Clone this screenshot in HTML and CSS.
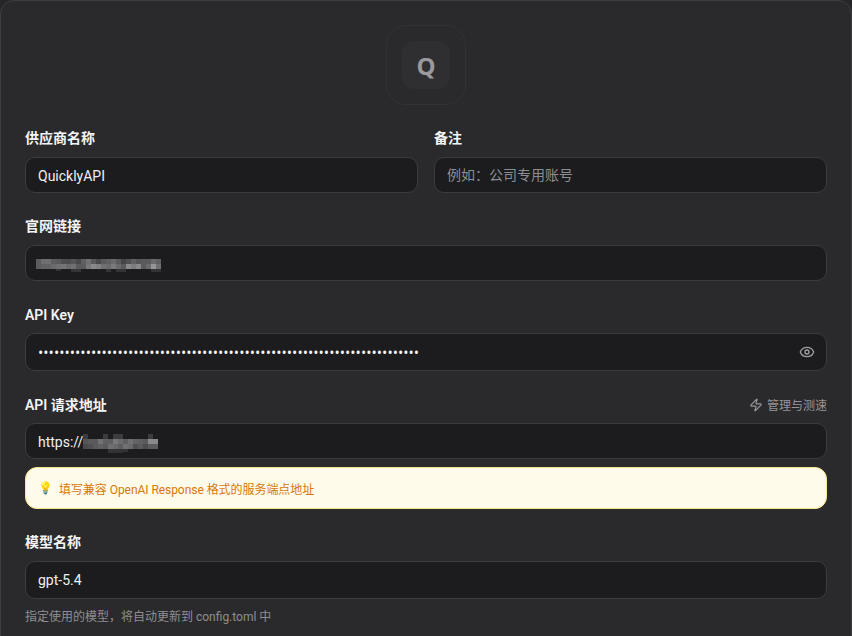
FILE: index.html
```html
<!DOCTYPE html>
<html lang="zh-CN">
<head>
<meta charset="utf-8">
<title>Provider</title>
<link rel="stylesheet" href="styles.css">
</head>
<body>
<main class="panel">
  <div class="logo-wrap"><div class="logo-ring"><div class="logo-tile">Q</div></div></div>
  <div class="row two">
    <div class="field">
      <label class="label cjk">供应商名称</label>
      <div class="input nudge">QuicklyAPI</div>
    </div>
    <div class="field">
      <label class="label cjk">备注</label>
      <div class="input placeholder">例如：公司专用账号</div>
    </div>
  </div>
  <div class="field">
    <label class="label cjk">官网链接</label>
    <div class="input"><svg class="mosaic site" width="125" height="20" viewBox="0 0 125 20" shape-rendering="crispEdges">
      <g transform="translate(0 6)">
        <rect x="0" width="5" height="5" fill="#5c5c5e"/><rect x="5" width="5" height="5" fill="#6e6e70"/><rect x="10" width="5" height="5" fill="#6e6e70"/><rect x="15" width="5" height="5" fill="#5e5e60"/><rect x="20" width="5" height="5" fill="#5a5a5c"/><rect x="25" width="5" height="5" fill="#4e4e50"/><rect x="30" width="5" height="5" fill="#4c4c4e"/><rect x="35" width="5" height="5" fill="#555557"/><rect x="40" width="5" height="5" fill="#48484a"/><rect x="45" width="5" height="5" fill="#5f5f61"/><rect x="50" width="5" height="5" fill="#707072"/><rect x="55" width="5" height="5" fill="#5a5a5c"/><rect x="60" width="5" height="5" fill="#4a4a4c"/><rect x="65" width="5" height="5" fill="#585a5c"/><rect x="70" width="5" height="5" fill="#606062"/><rect x="75" width="5" height="5" fill="#6a6a6c"/><rect x="80" width="5" height="5" fill="#585a5c"/><rect x="85" width="5" height="5" fill="#454547"/><rect x="90" width="5" height="5" fill="#505052"/><rect x="95" width="5" height="5" fill="#606062"/><rect x="100" width="5" height="5" fill="#555557"/><rect x="105" width="5" height="5" fill="#5a5a5c"/><rect x="110" width="5" height="5" fill="#585a5c"/><rect x="115" width="5" height="5" fill="#6a6a6c"/><rect x="120" width="5" height="5" fill="#606062"/>
      </g>
      <g transform="translate(0 11)">
        <rect x="0" width="5" height="5" fill="#5c5c5e"/><rect x="5" width="5" height="5" fill="#626264"/><rect x="10" width="5" height="5" fill="#626264"/><rect x="15" width="5" height="5" fill="#686a6c"/><rect x="20" width="5" height="5" fill="#707072"/><rect x="25" width="5" height="5" fill="#747476"/><rect x="30" width="5" height="5" fill="#686a6c"/><rect x="35" width="5" height="5" fill="#707072"/><rect x="40" width="5" height="5" fill="#5a5a5c"/><rect x="45" width="5" height="5" fill="#585a5c"/><rect x="50" width="5" height="5" fill="#78787a"/><rect x="55" width="5" height="5" fill="#88888a"/><rect x="60" width="5" height="5" fill="#808082"/><rect x="65" width="5" height="5" fill="#707072"/><rect x="70" width="5" height="5" fill="#6a6a6c"/><rect x="75" width="5" height="5" fill="#7a7a7c"/><rect x="80" width="5" height="5" fill="#6a6a6c"/><rect x="85" width="5" height="5" fill="#585a5c"/><rect x="90" width="5" height="5" fill="#8a8a8c"/><rect x="95" width="5" height="5" fill="#7c7c7e"/><rect x="100" width="5" height="5" fill="#88888a"/><rect x="105" width="5" height="5" fill="#585a5c"/><rect x="110" width="5" height="5" fill="#686a6c"/><rect x="115" width="5" height="5" fill="#959597"/><rect x="120" width="5" height="5" fill="#707072"/>
      </g>
      <g transform="translate(0 16)" fill="#343436">
        <rect x="20" width="5" height="2"/><rect x="35" width="10" height="3"/><rect x="70" width="5" height="3"/><rect x="80" width="10" height="3"/><rect x="115" width="10" height="3"/>
      </g>
    </svg></div>
  </div>
  <div class="field">
    <label class="label">API Key</label>
    <div class="input tall">
      <span class="dots">••••••••••••••••••••••••••••••••••••••••••••••••••••••••••••••••••••••••</span>
      <svg class="eye" width="16" height="16" viewBox="0 0 24 24" fill="none" stroke="currentColor" stroke-width="2" stroke-linecap="round" stroke-linejoin="round"><path d="M2.06 12.35a1 1 0 0 1 0-.7 10.75 10.75 0 0 1 19.88 0 1 1 0 0 1 0 .7 10.75 10.75 0 0 1-19.88 0"/><circle cx="12" cy="12" r="3"/></svg>
    </div>
  </div>
  <div class="field">
    <div class="label-row">
      <label class="label">API 请求地址</label>
      <span class="manage"><svg width="14" height="14" viewBox="0 0 24 24" fill="none" stroke="currentColor" stroke-width="2" stroke-linecap="round" stroke-linejoin="round"><path d="M4 14a1 1 0 0 1-.78-1.63l9.9-10.2a.5.5 0 0 1 .86.46l-1.92 6.02A1 1 0 0 0 13 10h7a1 1 0 0 1 .78 1.63l-9.9 10.2a.5.5 0 0 1-.86-.46l1.92-6.02A1 1 0 0 0 11 14z"/></svg>管理与测速</span>
    </div>
    <div class="input nudge">https://<svg class="mosaic url" width="75" height="24" viewBox="0 0 75 24" shape-rendering="crispEdges">
      <g fill="#3c3c3e">
        <rect x="0" y="5" width="5" height="5"/><rect x="20" y="5" width="5" height="5"/><rect x="30" y="5" width="10" height="5"/><rect x="65" y="5" width="5" height="5"/>
      </g>
      <g transform="translate(0 10)">
        <rect x="0" width="5" height="5" fill="#555557"/><rect x="5" width="5" height="5" fill="#5a5a5c"/><rect x="10" width="5" height="5" fill="#5a5a5c"/><rect x="15" width="5" height="5" fill="#727274"/><rect x="20" width="5" height="5" fill="#606062"/><rect x="25" width="5" height="5" fill="#5f5f61"/><rect x="30" width="5" height="5" fill="#78787a"/><rect x="35" width="5" height="5" fill="#6c6c6e"/><rect x="40" width="5" height="5" fill="#606062"/><rect x="45" width="5" height="5" fill="#707072"/><rect x="50" width="5" height="5" fill="#646466"/><rect x="55" width="5" height="5" fill="#606062"/><rect x="60" width="5" height="5" fill="#5a5a5c"/><rect x="65" width="5" height="5" fill="#8a8a8c"/><rect x="70" width="5" height="5" fill="#88888a"/>
      </g>
      <g transform="translate(0 15)">
        <rect x="0" width="5" height="5" fill="#4a4a4c"/><rect x="5" width="5" height="5" fill="#505052"/><rect x="10" width="5" height="5" fill="#585a5c"/><rect x="15" width="5" height="5" fill="#606062"/><rect x="20" width="5" height="5" fill="#585a5c"/><rect x="25" width="5" height="5" fill="#707072"/><rect x="30" width="5" height="5" fill="#686a6c"/><rect x="35" width="5" height="5" fill="#5e5e60"/><rect x="40" width="5" height="5" fill="#707072"/><rect x="45" width="5" height="5" fill="#686a6c"/><rect x="50" width="5" height="5" fill="#505052"/><rect x="55" width="5" height="5" fill="#5a5a5c"/><rect x="60" width="5" height="5" fill="#4c4c4e"/><rect x="65" width="5" height="5" fill="#5c5c5e"/><rect x="70" width="5" height="5" fill="#5c5c5e"/>
      </g>
      <g transform="translate(0 20)" fill="#333335">
        <rect x="25" width="15" height="4"/><rect x="40" width="5" height="3"/>
      </g>
    </svg></div>
    <div class="hint"><span class="bulb">💡</span>填写兼容 OpenAI Response 格式的服务端点地址</div>
  </div>
  <div class="field">
    <label class="label cjk">模型名称</label>
    <div class="input tall">gpt-5.4</div>
    <p class="help">指定使用的模型，将自动更新到 config.toml 中</p>
  </div>
</main>
</body>
</html>
```
FILE: styles.css
```css
* { box-sizing: border-box; }
html, body { margin: 0; height: 636px; overflow: hidden; background: #262628; }
body { font-family: Roboto, "Noto Sans CJK SC", sans-serif; font-size: 14px; color: #f2f2f3; }
.panel {
  height: 660px;
  padding: 24px;
  background: #2a2a2c;
  border: 1px solid #3e3e41;
  border-radius: 14px;
  display: flex;
  flex-direction: column;
  gap: 24px;
}
.logo-wrap { display: flex; justify-content: center; }
.logo-ring {
  width: 80px; height: 80px;
  border: 1px solid #323234;
  border-radius: 20px;
  display: flex; align-items: center; justify-content: center;
}
.logo-tile {
  width: 48px; height: 48px;
  border-radius: 12px;
  background: #2f2f32;
  color: #9a9a9e;
  font-family: "Open Sans", sans-serif;
  font-size: 24px; font-weight: 700;
  display: flex; align-items: center; justify-content: center;
}
.row.two { display: grid; grid-template-columns: 1fr 1fr; gap: 16px; }
.field { display: flex; flex-direction: column; }
.label { display: block; height: 20px; line-height: 20px; margin-bottom: 8px; font-weight: 600; color: #f4f4f5; }
.label.cjk { line-height: 18px; }
.label-row { display: flex; justify-content: space-between; align-items: center; }
.input {
  height: 36px;
  padding: 0 12px;
  background: #1c1c1e;
  border: 1px solid #3c3c3f;
  border-radius: 10px;
  display: flex; align-items: center;
  color: #f0f0f1;
}
.input.nudge { padding-top: 2px; }
.input.tall { height: 38px; justify-content: space-between; }
.placeholder { color: #8e8e92; padding-bottom: 2px; }
.dots { font-family: "Open Sans", sans-serif; font-size: 14px; letter-spacing: 0.03px; color: #f4f4f5; }
.eye { color: #a0a0a4; margin-right: -1px; }
.mosaic { display: block; flex: none; }
.mosaic.site { margin-left: -2px; }
.mosaic.url { margin-top: -2px; }
.manage { display: flex; align-items: center; gap: 4px; color: #959599; font-size: 12px; margin-bottom: 9px; }
.hint {
  margin-top: 8px;
  height: 42px;
  padding: 0 12px;
  background: #fffbeb;
  border: 1px solid #fde68a;
  border-radius: 12px;
  display: flex; align-items: center;
  color: #d97706;
  font-size: 12px;
  letter-spacing: -0.05px;
}
.bulb { margin-right: 6px; font-size: 12px; }
.help { margin: 9px 0 0; font-size: 12px; line-height: 18px; color: #8e8e92; }
```
